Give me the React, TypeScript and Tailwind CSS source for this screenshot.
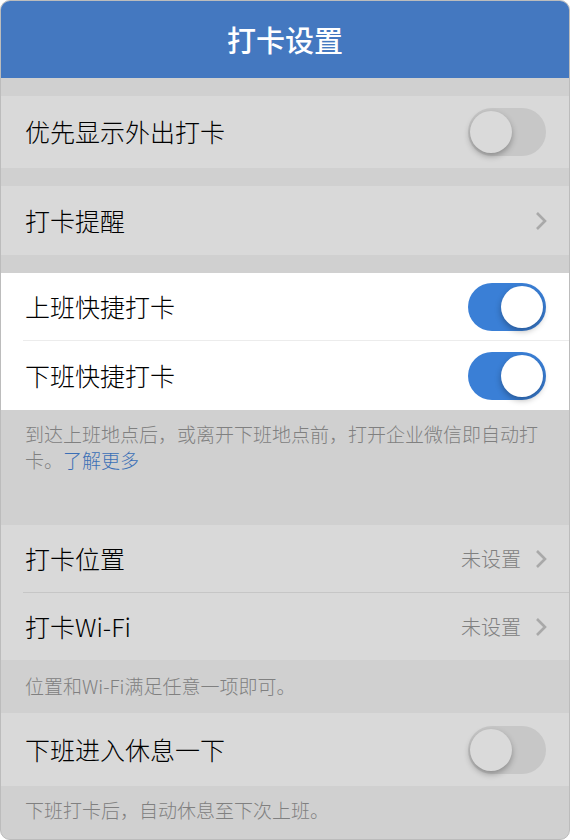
import React, { FC } from 'react';

const font = { fontFamily: '"Noto Sans CJK SC", "Noto Sans", sans-serif' };

const Toggle: FC<{ on?: boolean }> = ({ on }) => (
  <div
    className={`relative h-[48px] w-[78px] shrink-0 rounded-full ${on ? 'bg-[#3a7fd6]' : 'bg-[#c7c7c7]'}`}
  >
    <div
      className={`absolute top-[3px] h-[42px] w-[42px] rounded-full shadow-[0_3px_6px_rgba(0,0,0,0.3)] ${on ? 'right-[3px] bg-white' : 'left-[2px] bg-[#dadada]'}`}
    />
  </div>
);

const Chevron: FC = () => (
  <svg width="12" height="20" viewBox="0 0 12 20" className="-mr-[1px] shrink-0">
    <path d="M2 2 L10 10 L2 18" fill="none" stroke="#a9a9a9" strokeWidth="2.6" />
  </svg>
);

const Row: FC<{ label: string; h: string; children?: React.ReactNode; white?: boolean }> = ({
  label,
  h,
  children,
  white,
}) => (
  <div className={`flex items-center justify-between pl-[24px] pr-[23px] ${h} ${white ? 'bg-white' : 'bg-[#d9d9d9]'}`}>
    <span className="text-[25px] font-light text-black">{label}</span>
    {children}
  </div>
);

const Value: FC<{ text: string }> = ({ text }) => (
  <div className="flex items-center gap-[14px]">
    <span className="text-[20px] font-light text-[#808080]">{text}</span>
    <Chevron />
  </div>
);

const App: FC = () => {
  return (
    <div className="bg-white" style={font}>
      <div className="h-[840px] w-[570px] overflow-hidden rounded-[10px] border border-[#bcbcbc] bg-[#d0d0d0]">
        <div className="flex h-[77px] items-center justify-center bg-[#4478c0]">
          <h1 className="text-[29px] font-medium text-white">打卡设置</h1>
        </div>

        <div className="h-[18px]" />
        <Row label="优先显示外出打卡" h="h-[72px]">
          <Toggle />
        </Row>

        <div className="h-[18px]" />
        <Row label="打卡提醒" h="h-[69px]">
          <Chevron />
        </Row>

        <div className="h-[18px]" />
        <div className="bg-white">
          <Row label="上班快捷打卡" h="h-[67px]" white>
            <Toggle on />
          </Row>
          <div className="ml-[22px] h-px bg-[#ececec]" />
          <Row label="下班快捷打卡" h="h-[69px]" white>
            <Toggle on />
          </Row>
        </div>

        <div className="h-[115px] px-[24px] pt-[11px] text-[19px] font-light leading-[26px] text-[#808080]">
          到达上班地点后，或离开下班地点前，打开企业微信即自动打卡。
          <span className="text-[#3a6fb6]">了解更多</span>
        </div>

        <Row label="打卡位置" h="h-[67px]">
          <Value text="未设置" />
        </Row>
        <div className="h-px bg-[#d9d9d9] pl-[22px]">
          <div className="h-px bg-[#c6c6c6]" />
        </div>
        <Row label="打卡Wi-Fi" h="h-[67px]">
          <Value text="未设置" />
        </Row>

        <div className="flex h-[53px] items-center px-[24px] text-[19px] font-light text-[#808080]">
          位置和Wi-Fi满足任意一项即可。
        </div>

        <Row label="下班进入休息一下" h="h-[73px]">
          <Toggle />
        </Row>

        <div className="flex h-[48px] items-center px-[24px] text-[19px] font-light text-[#808080]">
          下班打卡后，自动休息至下次上班。
        </div>
      </div>
    </div>
  );
};

export default App;
